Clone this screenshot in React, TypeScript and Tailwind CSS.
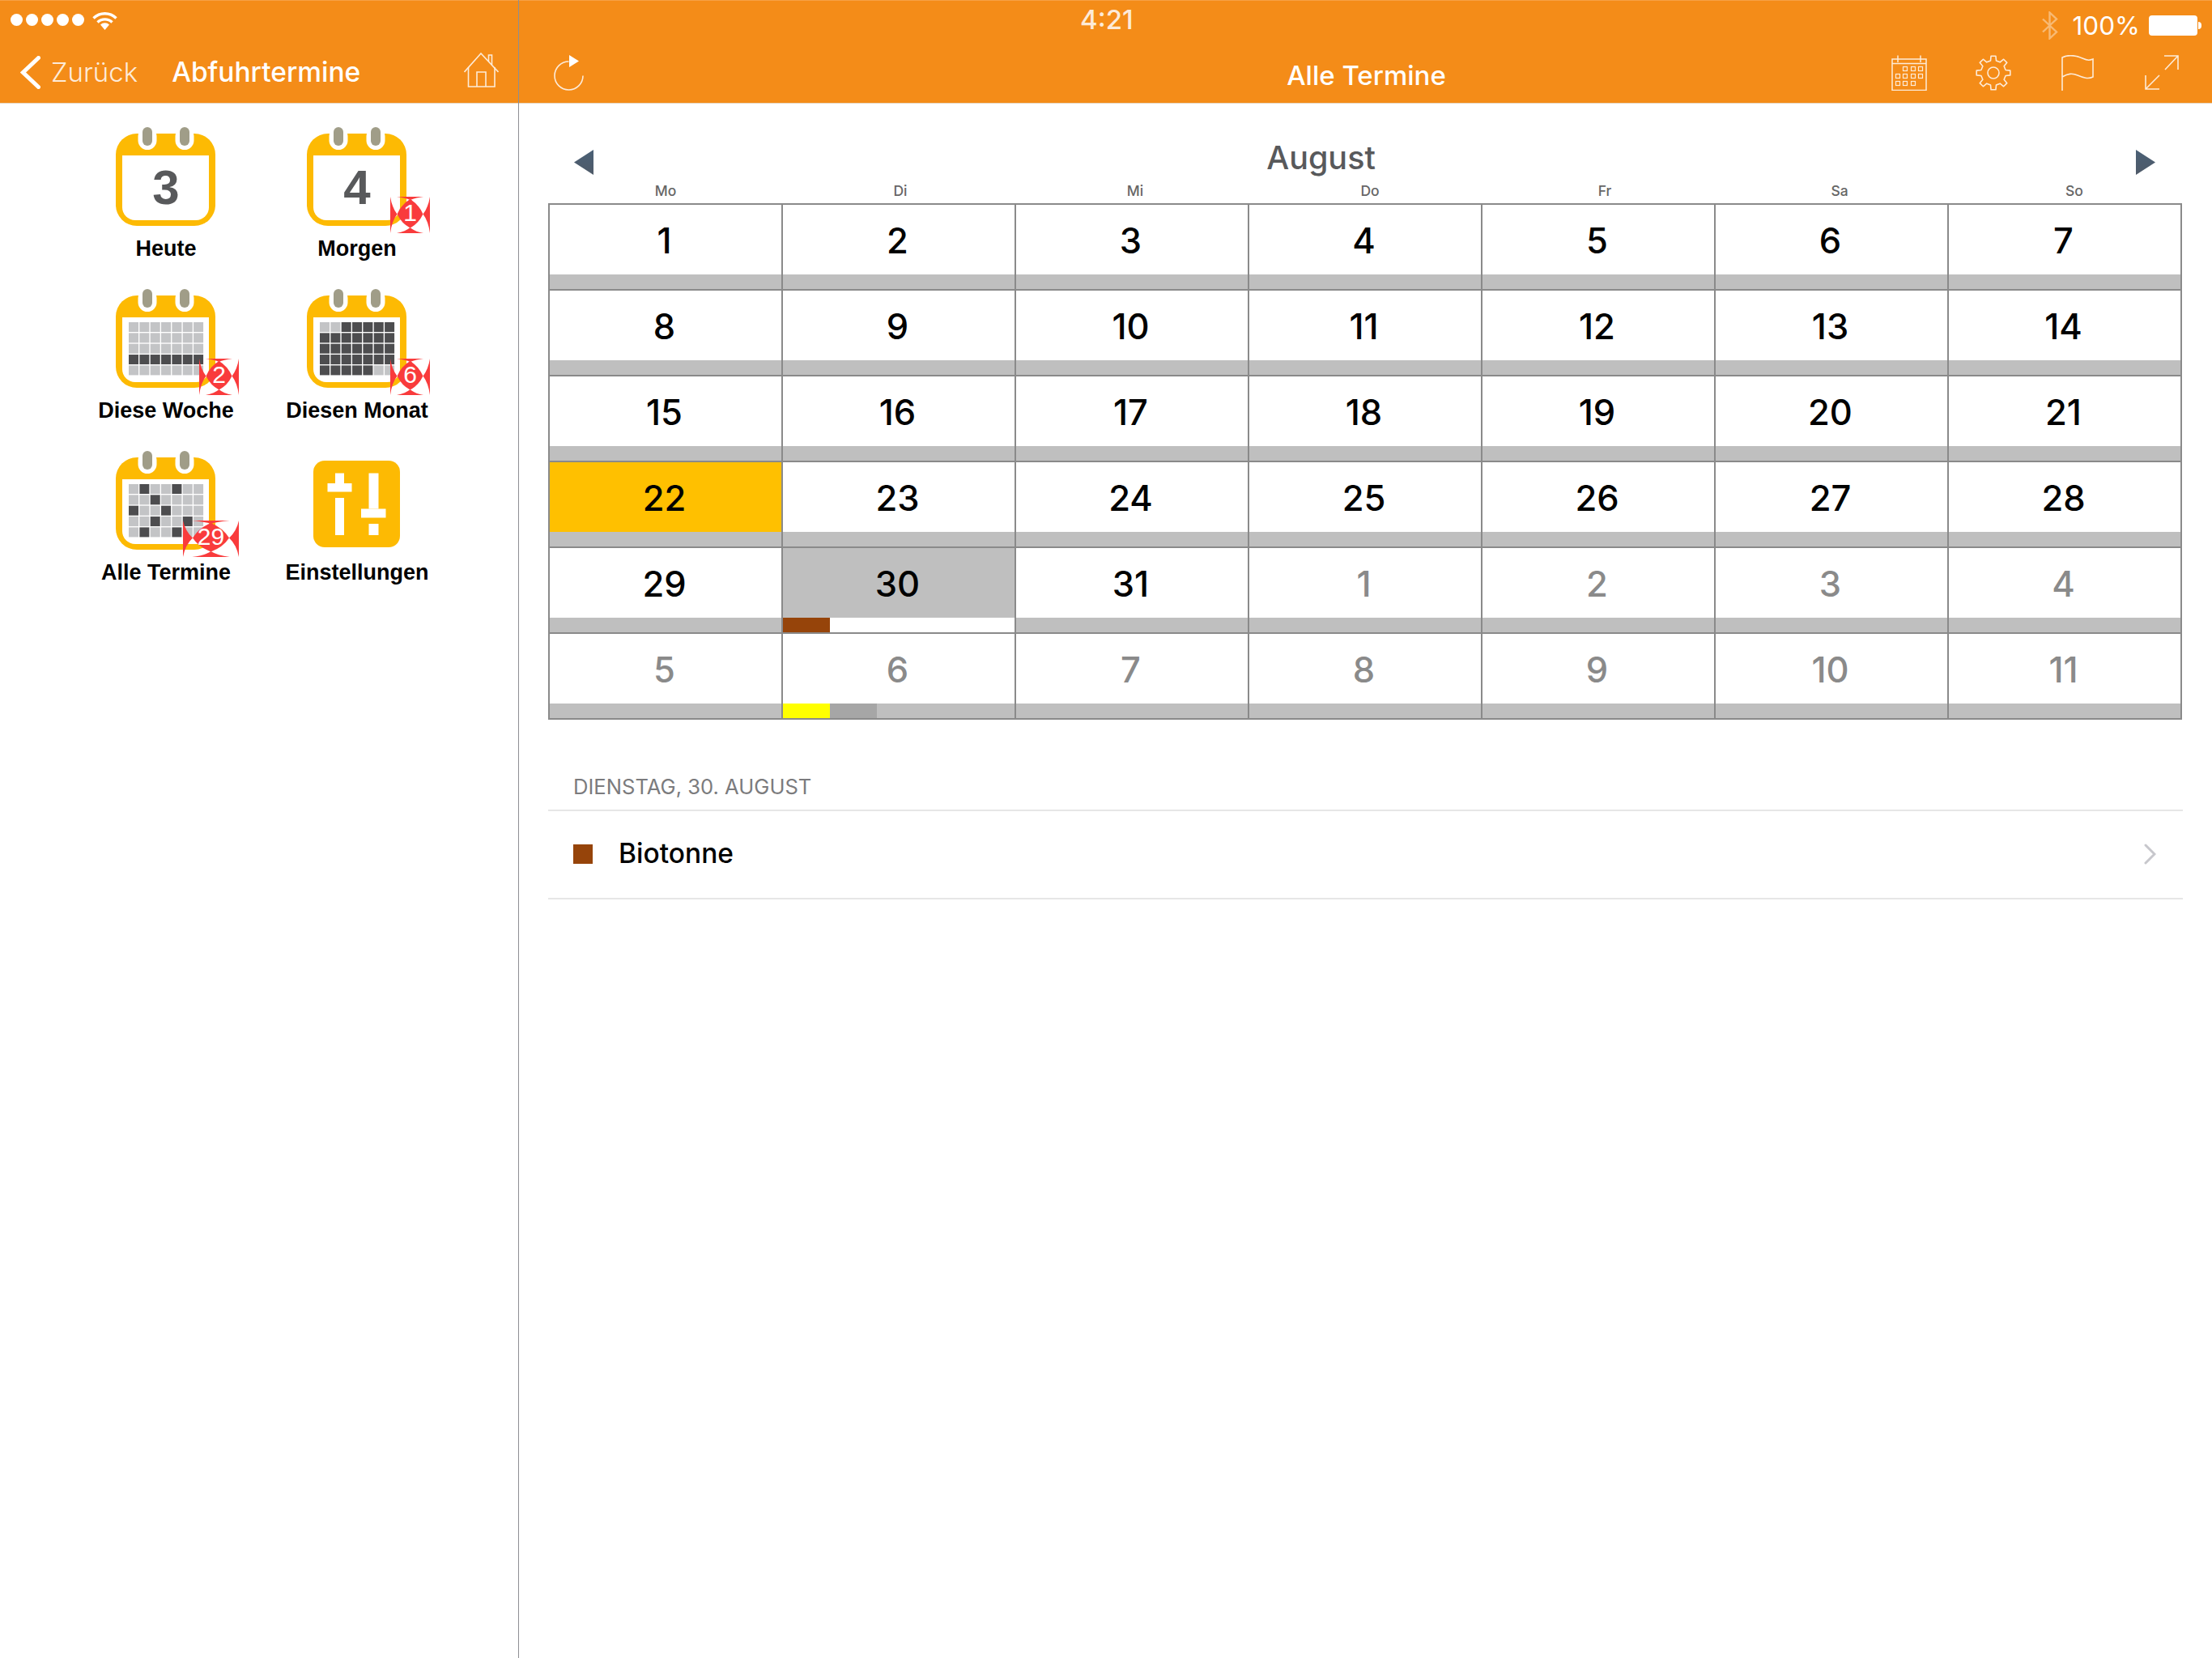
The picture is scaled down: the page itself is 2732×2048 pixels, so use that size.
import type { ReactNode } from "react"

const SF = "font-['Inter','Liberation_Sans',sans-serif]"

const LIGHT = "#C3C4C6"
const DARK = "#4D4D4F"

type DayCell = {
    day: number
    muted?: boolean
    today?: boolean
    selected?: boolean
    marks?: string[]
}

const marksByDay: Record<string, Partial<DayCell>> = {
    "22": { today: true },
    "30": { selected: true, marks: ["#96440A"] },
    "n6": { marks: ["#FFFF00", "#A6A6A6"] },
}

function buildDays(): DayCell[] {
    const cells: DayCell[] = []
    for (let d = 1; d <= 31; d++) cells.push({ day: d, ...marksByDay[String(d)] })
    for (let d = 1; d <= 11; d++) cells.push({ day: d, muted: true, ...marksByDay["n" + d] })
    return cells
}

function gearPath() {
    const pt = (r: number, deg: number) => {
        const a = (deg * Math.PI) / 180
        return (22 + r * Math.sin(a)).toFixed(2) + " " + (22 - r * Math.cos(a)).toFixed(2)
    }
    let d = ""
    for (let i = 0; i < 8; i++) {
        const a = i * 45
        d += (i === 0 ? "M" : "L") + pt(15.5, a - 13) + "L" + pt(21, a - 8) + "L" + pt(21, a + 8) + "L" + pt(15.5, a + 13)
    }
    return d + "Z"
}

function CalendarFrame({ children }: { children?: ReactNode }) {
    return (
        <svg width="124" height="124" viewBox="0 0 124 124" className="block">
            <rect x="0" y="8" width="123" height="114" rx="26" fill="#FDBA03" />
            <path d="M8 35H115V99a16 16 0 0 1-16 16H24a16 16 0 0 1-16-16Z" fill="#fff" />
            <rect x="27.5" y="0" width="23" height="28" rx="11.5" fill="#fff" />
            <rect x="73.5" y="0" width="23" height="28" rx="11.5" fill="#fff" />
            <rect x="33" y="0" width="12" height="23" rx="6" fill="#A09D88" />
            <rect x="79" y="0" width="12" height="23" rx="6" fill="#A09D88" />
            {children}
        </svg>
    )
}

function GridIcon({ isDark }: { isDark: (row: number, col: number) => boolean }) {
    return (
        <CalendarFrame>
            {[0, 1, 2, 3, 4].map((r) =>
                [0, 1, 2, 3, 4, 5, 6].map((c) => (
                    <rect
                        key={r + "-" + c}
                        x={16 + c * 13.35}
                        y={41 + r * 13.35}
                        width="12"
                        height="12"
                        fill={isDark(r, c) ? DARK : LIGHT}
                    />
                ))
            )}
        </CalendarFrame>
    )
}

function SettingsIcon() {
    return (
        <svg width="124" height="124" viewBox="0 0 124 124" className="block">
            <rect x="8" y="12" width="107" height="107" rx="14" fill="#FDBA03" />
            <g fill="#fff">
                <rect x="35" y="27.5" width="11" height="12.5" />
                <rect x="25.5" y="40" width="30" height="10.5" />
                <rect x="35" y="58" width="11" height="46" />
                <rect x="76.5" y="27.5" width="12" height="44" />
                <rect x="67" y="71.5" width="30.5" height="11" />
                <rect x="76.5" y="90" width="12" height="14" />
            </g>
        </svg>
    )
}

// the badge image is a badly stretched slice in the original, so the corners stay see-through
function Badge({ text, wide }: { text: string; wide?: boolean }) {
    return (
        <div className={"absolute top-[86px] right-[-28px] h-[45px] " + (wide ? "w-[69px]" : "w-[49px]")}>
            <svg width="100%" height="100%" viewBox="0 0 49 45" preserveAspectRatio="none" className="block">
                <g fill="#F93B3C">
                    <path d="M0 0Q2 13 8.5 21.5Q2 30 0 45Z" />
                    <path d="M49 0Q47 13 40.5 21.5Q47 30 49 45Z" />
                    <path d="M8 0H41Q30 1.5 24.5 4Q19 1.5 8 0Z" />
                    <path d="M8 45H41Q30 43 24.5 38Q19 43 8 45Z" />
                    <path d="M8.5 21.5Q14 9 24.5 3Q35 9 40.5 21.5Q35 33 24.5 38.5Q14 33 8.5 21.5Z" />
                </g>
            </svg>
            <span className="absolute inset-0 flex items-center justify-center pb-[5px] font-['Liberation_Sans',sans-serif] text-[30px] leading-none text-white">
                {text}
            </span>
        </div>
    )
}

function DigitIcon({ digit }: { digit: string }) {
    return (
        <>
            <CalendarFrame />
            <span className="absolute left-0 top-[53px] flex h-[43px] w-[124px] items-center justify-center font-['Liberation_Sans',sans-serif] text-[60px] font-bold leading-none text-[#58595B]">
                {digit}
            </span>
        </>
    )
}

function MenuItem({ label, badge, wide, children }: { label: string; badge?: string; wide?: boolean; children: ReactNode }) {
    return (
        <div className="flex h-[200px] flex-col items-center">
            <div className="relative h-[124px] w-[124px]">
                {children}
                {badge && <Badge text={badge} wide={wide} />}
            </div>
            <div className="mt-[11px] w-max whitespace-nowrap font-['Liberation_Sans',sans-serif] text-[27px] font-bold leading-[30px] text-black">
                {label}
            </div>
        </div>
    )
}

function Sidebar() {
    const allDark = ["0-1", "0-4", "1-2", "2-0", "2-3", "3-2", "3-5", "4-1", "4-4"]
    return (
        <aside className="h-[2048px] w-[641px] shrink-0 border-r border-[#8E8E93] bg-white">
            <header className="h-[128px] border-y border-t-[#F7A145] border-b-[#E6D5C0] bg-[#F48C18] text-white">
                <div className="flex h-[47px] items-center pl-[13px]">
                    <div className="flex gap-[4px]">
                        {[0, 1, 2, 3, 4].map((i) => (
                            <span key={i} className="h-[15px] w-[15px] rounded-full bg-white" />
                        ))}
                    </div>
                    <svg width="31" height="24" viewBox="0 0 31 24" className="ml-[10px]" fill="none" stroke="#fff" strokeWidth="3.4">
                        <path d="M1.5 9.5a20 20 0 0 1 28 0" />
                        <path d="M6.5 14.5a13 13 0 0 1 18 0" />
                        <path d="M15.5 24L10 17.5a8 8 0 0 1 11 0Z" fill="#fff" stroke="none" />
                    </svg>
                </div>
                <div className={"flex h-[79px] items-center pl-[25px] pr-[24px] pt-[4px] " + SF}>
                    <svg width="25" height="41" viewBox="0 0 25 41" fill="none" stroke="#fff" strokeWidth="5" strokeLinecap="round">
                        <path d="M22.5 2.5L3.5 20.5L22.5 38.5" />
                    </svg>
                    <span className="ml-[13px] text-[33px] font-light leading-none text-[#FDEBD8]">Zurück</span>
                    <span className="ml-[42px] text-[33.5px] font-medium leading-none">Abfuhrtermine</span>
                    <svg width="43" height="43" viewBox="0 0 43 43" className="mb-[6px] ml-auto" fill="none" stroke="#FDEBD8" strokeWidth="1.6">
                        <path d="M0.5 24L21 1L42.5 24" />
                        <path d="M5.5 18V42H38V18" />
                        <path d="M16 42V24H27V42" />
                        <path d="M30.5 11V3H34.5V15" />
                    </svg>
                </div>
            </header>
            <div className="grid grid-cols-[236px_236px] pl-[87px] pt-[29px]">
                <MenuItem label="Heute">
                    <DigitIcon digit="3" />
                </MenuItem>
                <MenuItem label="Morgen" badge="1">
                    <DigitIcon digit="4" />
                </MenuItem>
                <MenuItem label="Diese Woche" badge="2">
                    <GridIcon isDark={(r) => r === 3} />
                </MenuItem>
                <MenuItem label="Diesen Monat" badge="6">
                    <GridIcon isDark={(r, c) => !((r === 0 && c < 2) || (r === 4 && c > 4))} />
                </MenuItem>
                <MenuItem label="Alle Termine" badge="29" wide>
                    <GridIcon isDark={(r, c) => allDark.includes(r + "-" + c)} />
                </MenuItem>
                <MenuItem label="Einstellungen">
                    <SettingsIcon />
                </MenuItem>
            </div>
        </aside>
    )
}

function TopBar() {
    return (
        <header className={"h-[128px] border-y border-t-[#F7A145] border-b-[#E6D5C0] bg-[#F48C18] text-white " + SF}>
            <div className="flex h-[47px] items-center">
                <span className="ml-[693px] text-[33px] font-medium leading-none text-[#FDEBD8]">4:21</span>
                <div className="ml-auto flex items-center pr-[13px] pt-[14px]">
                    <svg width="20" height="35" viewBox="0 0 20 35" fill="none" stroke="#fff" strokeOpacity="0.4" strokeWidth="2.4">
                        <path d="M1 9.5L18 25.5L9.5 33.5V1.5L18 9.5L1 25.5" />
                    </svg>
                    <span className="ml-[18px] text-[31.5px] font-normal leading-none">100%</span>
                    <span className="ml-[11px] h-[25px] w-[60px] rounded-[4px] bg-white" />
                    <span className="ml-[1px] h-[9px] w-[4px] rounded-r-full bg-white" />
                </div>
            </div>
            <div className="flex h-[79px] items-center pl-[43px] pr-[41px] pt-[4px]">
                <svg width="37" height="44" viewBox="0 0 37 44" fill="none" stroke="#FDEBD8" strokeWidth="1.6">
                    <path d="M36 25.5A17.5 17.5 0 1 1 18.5 8" />
                    <path d="M19 0L31 7.5L19 15Z" fill="#fff" stroke="none" />
                </svg>
                <div className="mt-[7px] flex-1 pl-[318px] text-center text-[33px] font-medium leading-none">Alle Termine</div>
                <svg width="44" height="44" viewBox="0 0 44 44" fill="none" stroke="#FDEBD8" strokeWidth="1.5">
                    <path d="M1 5H43V43.5H1Z" />
                    <path d="M1 10.5H43" />
                    <path d="M8 0.5V9M36 0.5V9" />
                    {[
                        [17, 17],
                        [27, 17],
                        [36, 17],
                        [8, 26],
                        [17, 26],
                        [27, 26],
                        [36, 26],
                        [8, 35],
                        [17, 35],
                        [27, 35],
                    ].map(([x, y]) => (
                        <rect key={x + "-" + y} x={x - 2.5} y={y - 2.5} width="5" height="5" strokeWidth="1.2" />
                    ))}
                </svg>
                <svg width="44" height="44" viewBox="0 0 44 44" className="ml-[60px]" fill="none" stroke="#FDEBD8" strokeWidth="1.6" strokeLinejoin="round">
                    <path d={gearPath()} />
                    <circle cx="22" cy="22" r="7" />
                </svg>
                <svg width="40" height="44" viewBox="0 0 40 44" className="ml-[62px]" fill="none" stroke="#FDEBD8" strokeWidth="1.6">
                    <path d="M1 44V3C9 -1 19 1 26 4S35 6.5 39 5V27C33 30 27 28 20 25S8 23 1 27" />
                </svg>
                <svg width="42" height="43" viewBox="0 0 42 43" className="ml-[63px]" fill="none" stroke="#FDEBD8" strokeWidth="1.6">
                    <path d="M24 1H41V18M41 1L25 18" />
                    <path d="M1 25V42H18M1 42L18 25" />
                </svg>
            </div>
        </header>
    )
}

function DayCellView({ cell }: { cell: DayCell }) {
    const numberBg = cell.today ? "bg-[#FFC000]" : cell.selected ? "bg-[#BFBFBF]" : "bg-white"
    const bandBg = cell.selected ? "bg-white" : "bg-[#BFBFBF]"
    return (
        <div className="h-[106px] border-b-2 border-r-2 border-[#8A8A8A]">
            <div
                className={
                    "flex h-[86px] items-center justify-center pr-[3px] pt-[3px] text-[43.5px] font-medium leading-none " +
                    numberBg +
                    (cell.muted ? " text-[#8A8A8A]" : " text-black")
                }
            >
                {cell.day}
            </div>
            <div className={"flex h-[18px] " + bandBg}>
                {cell.marks?.map((color) => (
                    <span key={color} className="h-full w-[58px]" style={{ backgroundColor: color }} />
                ))}
            </div>
        </div>
    )
}

function Calendar() {
    const weekdays = ["Mo", "Di", "Mi", "Do", "Fr", "Sa", "So"]
    return (
        <section className="pl-[36px]">
            <div className="mt-[57px] flex h-[31px] w-[2018px] items-center pl-[32px] pr-[33px]">
                <svg width="24" height="31" viewBox="0 0 24 31">
                    <defs>
                        <linearGradient id="arrow" x1="0" y1="0" x2="0" y2="1">
                            <stop offset="0" stopColor="#4A6076" />
                            <stop offset="1" stopColor="#4F5A68" />
                        </linearGradient>
                    </defs>
                    <path d="M24 0V31L0 15.5Z" fill="url(#arrow)" />
                </svg>
                <div className="mb-[10px] flex-1 pr-[108px] text-center text-[39.5px] font-medium leading-none text-[#58595B]">August</div>
                <svg width="24" height="31" viewBox="0 0 24 31">
                    <path d="M0 0V31L24 15.5Z" fill="url(#arrow)" />
                </svg>
            </div>
            <div className="mb-[3px] mt-[8px] grid h-[24px] w-[2030px] grid-cols-7 items-center text-center text-[17.5px] font-medium leading-none text-[#666666]">
                {weekdays.map((d) => (
                    <span key={d}>{d}</span>
                ))}
            </div>
            <div className="grid w-[2018px] grid-cols-7 border-l-2 border-t-2 border-[#8A8A8A]">
                {buildDays().map((cell, i) => (
                    <DayCellView key={i} cell={cell} />
                ))}
            </div>
        </section>
    )
}

function EventList() {
    return (
        <section className="ml-[36px] w-[2019px]">
            <div className="mt-[68px] border-b-2 border-[#E6E6E6] pb-[13px] pl-[31px] text-[25.6px] leading-[30px] text-[#7B7B7D]">
                DIENSTAG, 30. AUGUST
            </div>
            <div className="flex h-[109px] items-center border-b-2 border-[#E6E6E6] pb-[2px] pl-[31px] pr-[33px]">
                <span className="h-[24px] w-[24px] bg-[#96440A]" />
                <span className="ml-[32px] text-[33.5px] font-medium leading-none text-black">Biotonne</span>
                <svg width="15" height="26" viewBox="0 0 15 26" className="ml-auto" fill="none" stroke="#C7C7CC" strokeWidth="3" strokeLinecap="round">
                    <path d="M2 2L13 13L2 24" />
                </svg>
            </div>
        </section>
    )
}

export default function App() {
    return (
        <div className="flex h-[2048px] w-[2732px] overflow-hidden bg-white">
            <Sidebar />
            <main className={"flex-1 " + SF}>
                <TopBar />
                <Calendar />
                <EventList />
            </main>
        </div>
    )
}
